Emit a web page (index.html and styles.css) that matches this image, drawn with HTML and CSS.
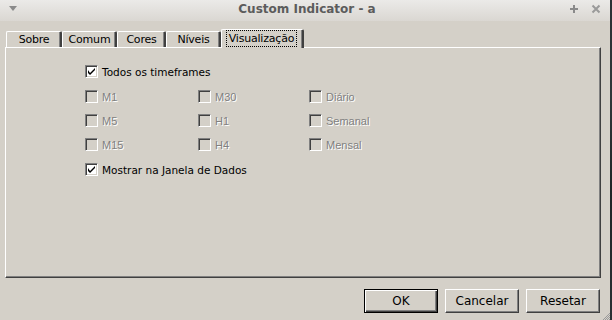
FILE: index.html
```html
<!DOCTYPE html>
<html>
<head>
<meta charset="utf-8">
<link rel="stylesheet" href="styles.css">
</head>
<body>
<div class="screen">
  <div class="window">
    <div class="titlebar">
      <svg class="menu-arrow" width="8" height="5" viewBox="0 0 8 5"><path d="M0 0h8L4 5z" fill="#8a8a8a"/></svg>
      <div class="title">Custom Indicator - a</div>
      <div class="wbtns">
        <svg width="10" height="10" viewBox="0 0 10 10"><path d="M5 1v8M1 5h8" stroke="#8a8a8a" stroke-width="2"/></svg>
        <svg width="10" height="10" viewBox="0 0 10 10"><path d="M1.5 1.5l7 7M8.5 1.5l-7 7" stroke="#9a9a9a" stroke-width="2"/></svg>
      </div>
    </div>
    <div class="body">
      <div class="tabs">
        <div class="tab t-sobre">Sobre</div>
        <div class="tab t-comum">Comum</div>
        <div class="tab t-cores">Cores</div>
        <div class="tab t-niveis">Níveis</div>
        <div class="tab active"><span class="focus">Visualização</span></div>
      </div>
      <div class="panel">
        <label class="cb on main"><span class="box"><svg width="7" height="7" viewBox="0 0 7 7"><path d="M0 2v3l2 2 5-5V0L2 5z" fill="#000"/></svg></span><span class="lbl">Todos os timeframes</span></label>
        <div class="grid">
          <label class="cb off"><span class="box"></span><span class="lbl">M1</span></label>
          <label class="cb off"><span class="box"></span><span class="lbl">M30</span></label>
          <label class="cb off"><span class="box"></span><span class="lbl">Diário</span></label>
          <label class="cb off"><span class="box"></span><span class="lbl">M5</span></label>
          <label class="cb off"><span class="box"></span><span class="lbl">H1</span></label>
          <label class="cb off"><span class="box"></span><span class="lbl">Semanal</span></label>
          <label class="cb off"><span class="box"></span><span class="lbl">M15</span></label>
          <label class="cb off"><span class="box"></span><span class="lbl">H4</span></label>
          <label class="cb off"><span class="box"></span><span class="lbl">Mensal</span></label>
        </div>
        <label class="cb on main"><span class="box"><svg width="7" height="7" viewBox="0 0 7 7"><path d="M0 2v3l2 2 5-5V0L2 5z" fill="#000"/></svg></span><span class="lbl">Mostrar na Janela de Dados</span></label>
      </div>
      <div class="buttons">
        <button class="btn default">OK</button>
        <button class="btn">Cancelar</button>
        <button class="btn">Resetar</button>
      </div>
    </div>
    <svg class="grip" width="8" height="8" viewBox="0 0 8 8"><path d="M8 1L1 8M8 3L3 8M8 5L5 8M8 7L7 8" stroke="#9a9a9a" stroke-width="1"/></svg>
  </div>
  <div class="edge"></div>
</div>
</body>
</html>
```
FILE: styles.css
```css
html, body {
  margin: 0;
  padding: 0;
}
body {
  width: 612px;
  height: 320px;
  overflow: hidden;
  background: #d4d0c8;
  font-family: "DejaVu Sans", sans-serif;
}
.screen {
  display: flex;
  width: 612px;
  height: 320px;
}
.window {
  position: relative;
  width: 610px;
  height: 320px;
  background: #d4d0c8;
  display: flex;
  flex-direction: column;
}
.edge {
  width: 2px;
  height: 320px;
  background: linear-gradient(#2b3034, #30383a 30%, #1f2527 60%, #2b3034);
}
.titlebar {
  height: 21px;
  display: flex;
  align-items: center;
  background: linear-gradient(#ebeae8, #dad7d2);
  position: relative;
}
.menu-arrow {
  margin-left: 9px;
  margin-top: -4px;
}
.title {
  position: absolute;
  left: 0;
  right: 0;
  top: 2px;
  text-align: center;
  font-weight: bold;
  font-size: 12px;
  color: #5c5c5c;
  padding-left: 4px;
}
.wbtns {
  margin-left: auto;
  margin-right: 9px;
  margin-top: -4px;
  display: flex;
  gap: 12px;
}
.body {
  padding: 6px 0 0 5px;
  display: flex;
  flex-direction: column;
}
.tabs {
  display: flex;
  align-items: flex-end;
  height: 20px;
  position: relative;
  z-index: 1;
  padding-left: 1px;
}
.tab {
  box-sizing: border-box;
  height: 16px;
  display: flex;
  align-items: center;
  justify-content: center;
  font-size: 11px;
  letter-spacing: -0.2px;
  color: #000;
  border-top: 1px solid #fff;
  border-left: 1px solid #fff;
  border-right: 2px solid #404040;
  box-shadow: inset -1px 0 #808080;
  border-radius: 2px 2px 0 0;
  padding-left: 1px;
}
.t-sobre { width: 56px; }
.t-comum { width: 55px; }
.t-cores { width: 49px; }
.t-niveis { width: 55px; }
.tab.active {
  width: 83px;
  height: 19px;
  margin-bottom: -1px;
  padding: 0 1px 1px 0;
  background: #d4d0c8;
  margin-left: 0;
}
.focus {
  outline: 1px dotted #000;
  padding: 0 2px;
  line-height: 15px;
}
.panel {
  width: 515px;
  height: 212px;
  border-top: 1px solid #fff;
  border-left: 1px solid #fff;
  border-right: 1px solid #404040;
  border-bottom: 1px solid #404040;
  box-shadow: inset -1px -1px #808080;
  padding: 17px 0 0 79px;
  font-family: "DejaVu Sans", sans-serif;
  font-size: 10.5px;
}
.cb {
  display: flex;
  align-items: center;
  height: 13px;
}
.box {
  width: 11px;
  height: 11px;
  border-top: 1px solid #808080;
  border-left: 1px solid #808080;
  border-right: 1px solid #fff;
  border-bottom: 1px solid #fff;
  box-shadow: inset 1px 1px #404040, inset -1px -1px #d4d0c8;
  display: flex;
  align-items: center;
  justify-content: center;
  flex: none;
}
.on .box {
  background: #fff;
}
.off .box {
  background: #d4d0c8;
}
.lbl {
  margin-left: 4px;
  white-space: nowrap;
}
.on .lbl {
  color: #000;
}
.off .lbl {
  color: #808080;
  text-shadow: 1px 1px #fff;
  font-family: "Liberation Sans", sans-serif;
  font-size: 11px;
}
.grid {
  display: grid;
  grid-template-columns: 113px 111px auto;
  row-gap: 11px;
  margin-top: 12px;
  margin-bottom: 12px;
}
.buttons {
  display: flex;
  justify-content: flex-end;
  gap: 7px;
  width: 595px;
  margin-top: 11px;
}
.btn {
  width: 74px;
  height: 24px;
  background: #d4d0c8;
  border-top: 1px solid #fff;
  border-left: 1px solid #fff;
  border-right: 1px solid #404040;
  border-bottom: 1px solid #404040;
  box-shadow: inset -1px -1px #808080;
  font-family: "DejaVu Sans", sans-serif;
  font-size: 12px;
  color: #000;
  padding: 0;
  margin: 0;
}
.btn.default {
  border: 1px solid #000;
  box-shadow: inset 1px 1px #fff, inset -1px -1px #404040, inset -2px -2px #808080;
}
.grip {
  position: absolute;
  right: 0;
  bottom: 0;
}
```
